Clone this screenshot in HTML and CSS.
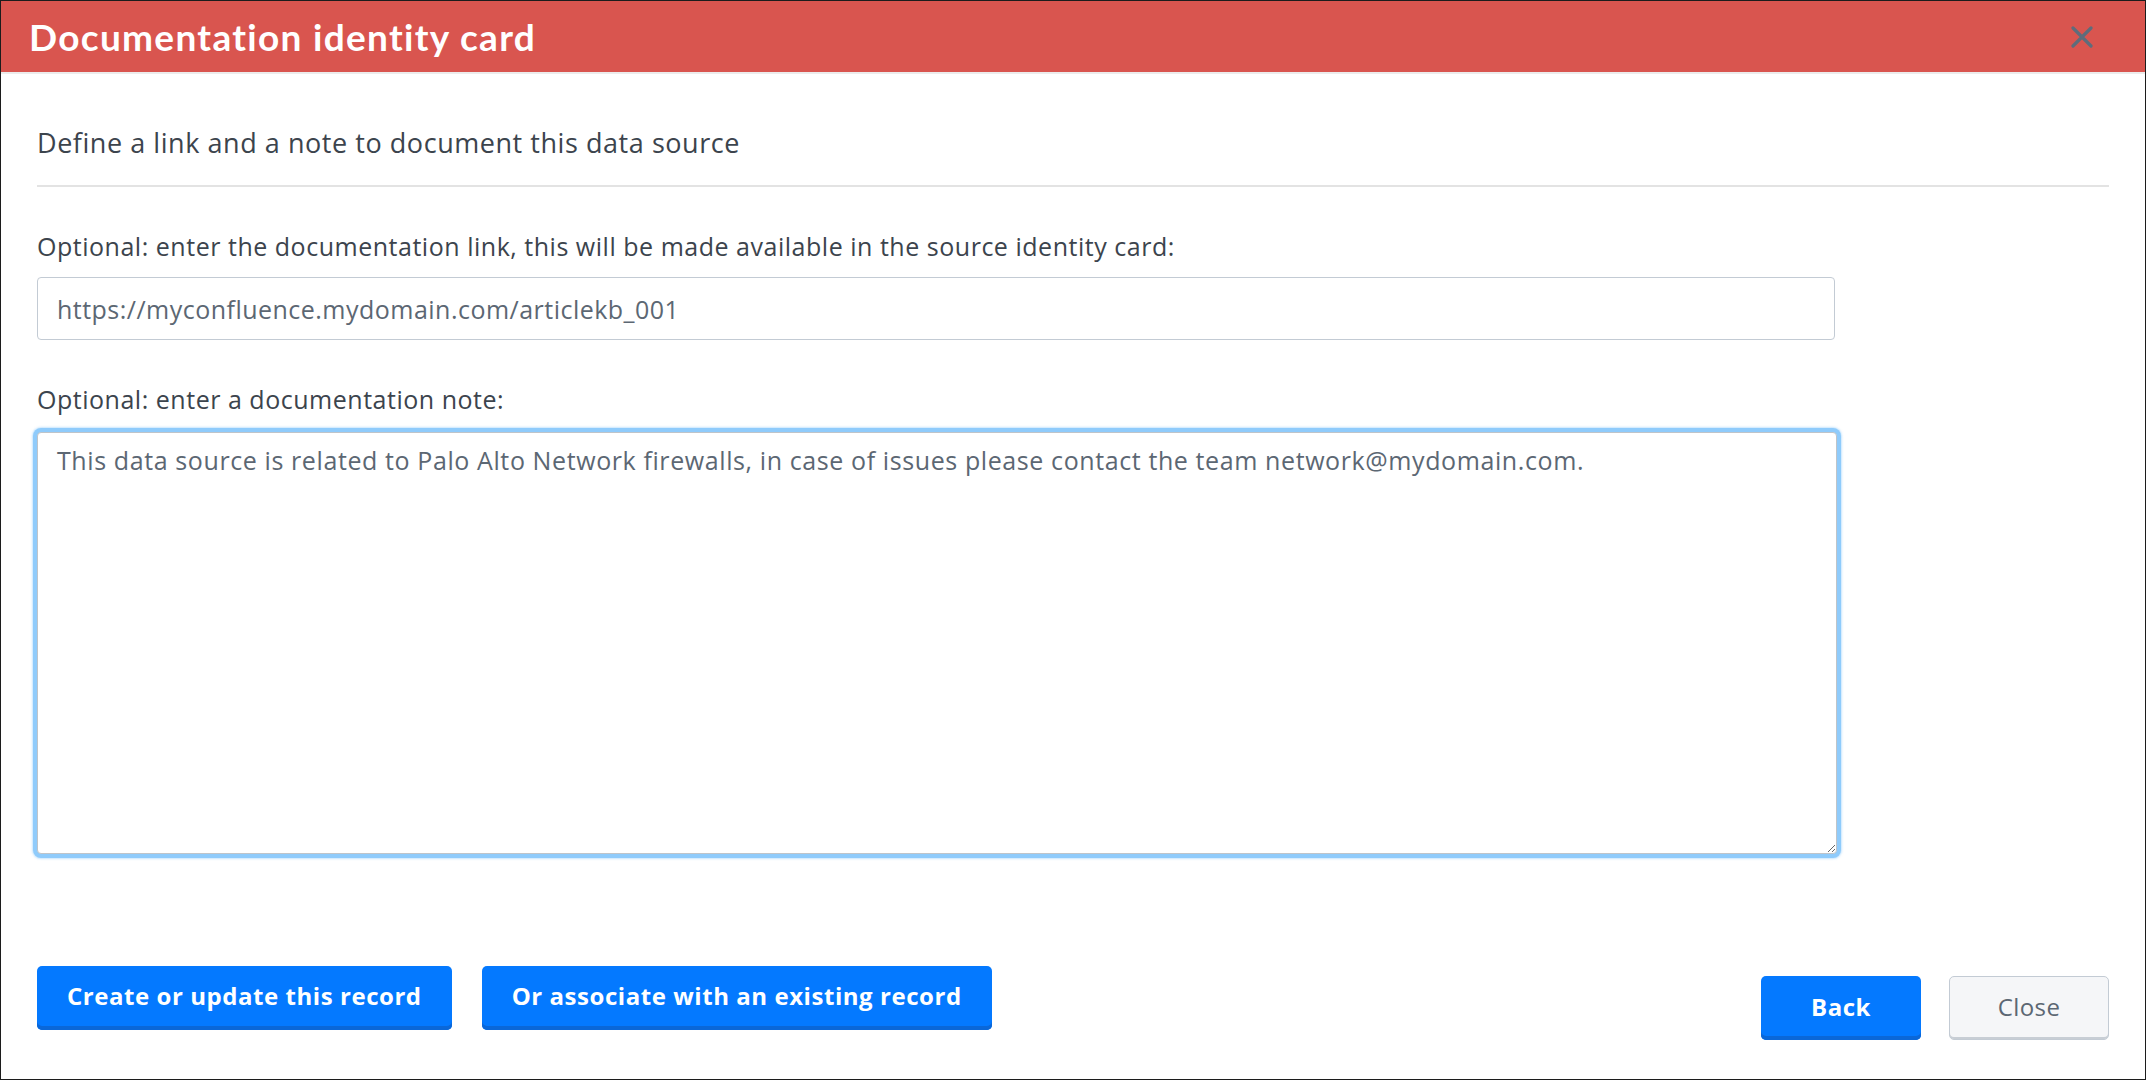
FILE: index.html
```html
<!DOCTYPE html>
<html>
<head>
<meta charset="utf-8">
<link rel="stylesheet" href="styles.css">
</head>
<body>
<div class="modal">
  <div class="header">
    <h1 class="title">Documentation identity card</h1>
    <svg class="close-x" width="22" height="22" viewBox="0 0 22 22">
      <path d="M2 2 L20 20 M20 2 L2 20" stroke="#5e6c7b" stroke-width="3.2" stroke-linecap="round" fill="none"/>
    </svg>
  </div>
  <div class="body">
    <p class="subtitle">Define a link and a note to document this data source</p>
    <div class="rule"></div>
    <label class="label first">Optional: enter the documentation link, this will be made available in the source identity card:</label>
    <input class="field" type="text" value="https://myconfluence.mydomain.com/articlekb_001">
    <label class="label">Optional: enter a documentation note:</label>
    <textarea class="note">This data source is related to Palo Alto Network firewalls, in case of issues please contact the team network@mydomain.com.</textarea>
    <div class="spacer"></div>
    <div class="footer">
      <div class="group left">
        <button class="btn primary">Create or update this record</button>
        <button class="btn primary">Or associate with an existing record</button>
      </div>
      <div class="group right">
        <button class="btn primary small">Back</button>
        <button class="btn secondary small">Close</button>
      </div>
    </div>
  </div>
</div>
</body>
</html>
```

FILE: styles.css
```css
* { box-sizing: border-box; }
html, body { margin: 0; padding: 0; background: #fff; }
body { font-family: "Open Sans", Lato, Arial, sans-serif; }

.modal {
  width: 2146px;
  height: 1080px;
  border: 1px solid #1c1c1c;
  display: flex;
  flex-direction: column;
  background: #fff;
}

.header {
  height: 73px;
  background: #d9554f;
  border-bottom: 2px solid #ececec;
  display: flex;
  align-items: center;
  justify-content: space-between;
  padding: 0 52px 0 28px;
  flex: none;
}
.title {
  margin: 0;
  color: #fff;
  font-family: Lato, "Open Sans", Arial, sans-serif;
  font-weight: 700;
  font-size: 37px;
  line-height: 44px;
  letter-spacing: 1.3px;
}
.close-x { display: block; margin-top: 1px; }

.body {
  flex: 1;
  display: flex;
  flex-direction: column;
  padding: 53px 36px 39px 36px;
}

.subtitle {
  margin: 0;
  font-size: 27px;
  line-height: 32px;
  color: #3c444d;
  letter-spacing: 0.55px;
}
.rule {
  height: 2px;
  background: #e3e3e3;
  margin: 26px 0 0 0;
  width: 2072px;
}
.label {
  display: block;
  font-size: 25px;
  line-height: 30px;
  color: #3c444d;
  margin-top: 44px;
  letter-spacing: 0.52px;
}

.field {
  display: block;
  width: 1798px;
  height: 63px;
  margin-top: 16px;
  border: 1px solid #c3cbd4;
  border-radius: 4px;
  padding: 0 19px;
  font-family: "Open Sans", Lato, Arial, sans-serif;
  font-size: 25px;
  line-height: 30px;
  letter-spacing: 0.48px;
  color: #5c6773;
  background: #fff;
  outline: none;
}
.note {
  display: block;
  width: 1800px;
  height: 422px;
  margin-top: 18px;
  border: 1px solid #bfc4c9;
  border-radius: 4px;
  padding: 12px 19px;
  font-family: "Open Sans", Lato, Arial, sans-serif;
  font-size: 25px;
  line-height: 30px;
  letter-spacing: 0.6px;
  color: #5c6773;
  background: #fff;
  outline: none;
  box-shadow: 0 0 0 4px #8fcbfb, 0 0 2px 5px rgba(143,203,251,0.5);
  resize: vertical;
}
.spacer { flex: 1; }

.footer {
  display: flex;
  justify-content: space-between;
  align-items: flex-end;
}
.group { display: flex; }
.group.left { gap: 30px; margin-bottom: 10px; }
.group.right { gap: 28px; }

.btn {
  height: 64px;
  border-radius: 5px;
  font-family: "Open Sans", Lato, Arial, sans-serif;
  font-size: 24px;
  line-height: 30px;
  padding: 0 30px 4px 30px;
  cursor: pointer;
}
.btn.primary {
  background: #0479ff;
  color: #fff;
  font-weight: 700;
  letter-spacing: 0.55px;
  border: none;
  box-shadow: inset 0 -4px 0 #0a67d8;
}
.btn.small { width: 160px; padding: 0 0 2px 0; }
.btn.secondary {
  background: #f5f6f8;
  color: #5c6773;
  font-weight: 400;
  letter-spacing: 0.4px;
  border: 1px solid #c3cbd4;
  box-shadow: inset 0 -2px 0 #c8ced5;
}
```
